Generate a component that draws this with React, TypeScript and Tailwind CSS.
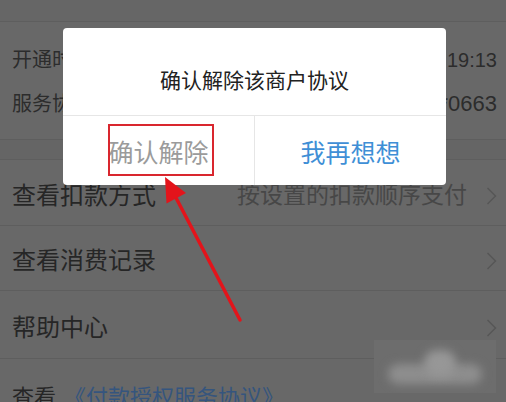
import React from 'react'

const font = "font-['Liberation_Sans','Noto_Sans_CJK_SC',sans-serif]"

function Chevron() {
  return (
    <svg width="11" height="18" viewBox="0 0 11 18" className="shrink-0">
      <path d="M1.5 1 L9.5 9 L1.5 17" fill="none" stroke="#565656" strokeWidth="1.4" />
    </svg>
  )
}

type Row = { label: string; value?: string; h: string }

const rows: Row[] = [
  { label: '查看扣款方式', value: '按设置的扣款顺序支付', h: 'h-[66px]' },
  { label: '查看消费记录', h: 'h-[65px]' },
  { label: '帮助中心', h: 'h-[68px]' },
]

export default function App() {
  return (
    <div className={`relative w-[506px] h-[402px] overflow-hidden bg-[#686868] ${font}`}>
      {/* page underneath */}
      <div className="flex flex-col">
        <div className="h-[22px] border-b border-[#5e5e5e] bg-[#666666]" />
        <div className="flex flex-col pt-[16px] pb-[13px] pl-[12px] pr-[9px]">
          <div className="flex h-[44px] items-center justify-between text-[20px] leading-none text-[#2c2c2c]">
            <span>开通时间</span>
            <span>2017-09-23 19:13</span>
          </div>
          <div className="flex h-[44px] items-center justify-between text-[20px] leading-none text-[#2c2c2c]">
            <span>服务协议号</span>
            <span className="text-[22px]">2088**0663</span>
          </div>
        </div>
        <div className="h-[21px] border-t border-b border-[#5e5e5e] bg-[#656565]" />
        {rows.map((row, index) => (
          <div
            key={index}
            className={`flex ${row.h} items-center justify-between border-b border-[#5e5e5e] pl-[12px] pr-[9px] pt-[6px]`}
          >
            <span className="text-[24px] leading-none text-[#262626]">{row.label}</span>
            <div className="flex items-center gap-[19px]">
              {row.value && (
                <span className="text-[23px] leading-none text-[#474747]">{row.value}</span>
              )}
              <Chevron />
            </div>
          </div>
        ))}
        <div className="flex h-[60px] items-center gap-[8px] pl-[12px] pt-[18px] text-[22px] leading-none">
          <span className="text-[#262626]">查看</span>
          <span className="text-[#35557e]">《付款授权服务协议》</span>
        </div>
      </div>

      {/* dialog */}
      <div className="absolute left-[63px] top-[28px] flex h-[157px] w-[383px] flex-col rounded-[4px] bg-white">
        <div className="flex h-[88px] items-center justify-center border-b border-[#e6e6e6] pt-[18px] text-[21px] leading-none text-[#222]">
          确认解除该商户协议
        </div>
        <div className="flex flex-1">
          <div className="flex flex-1 items-center justify-center border-r border-[#e6e6e6] pt-[5px] text-[25px] leading-none text-[#9b9b9b]">
            确认解除
          </div>
          <div className="flex flex-1 items-center justify-center pt-[5px] text-[25px] leading-none text-[#3f8fd6]">
            我再想想
          </div>
        </div>
      </div>

      {/* annotation box */}
      <div className="absolute left-[108px] top-[124px] h-[52px] w-[106px] border-2 border-[#d9262e]" />

      {/* annotation arrow */}
      <svg className="pointer-events-none absolute inset-0" width="506" height="402" viewBox="0 0 506 402">
        <line x1="240" y1="320" x2="174" y2="194" stroke="#e3141b" strokeWidth="3.5" strokeLinecap="round" />
        <polygon points="165,177 186,193 166.5,203.5" fill="#e3141b" />
      </svg>

      {/* watermark */}
      <div className="absolute left-[374px] top-[340px] h-[53px] w-[122px] overflow-hidden bg-[#6d6d6d]">
        <div className="absolute left-[14px] top-[24px] h-[20px] w-[94px] rounded-full bg-[#8e8e8e] blur-[5px]" />
        <div className="absolute left-[50px] top-[10px] h-[26px] w-[32px] rounded-full bg-[#979797] blur-[5px]" />
      </div>
    </div>
  )
}
